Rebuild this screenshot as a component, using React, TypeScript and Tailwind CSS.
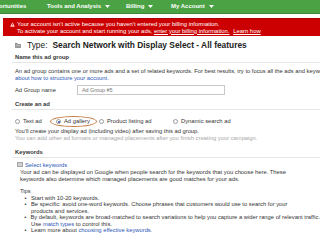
import React from 'react';

const Caret = () => (
  <svg width="5" height="3" viewBox="0 0 5 3" className="ml-[4px] inline-block">
    <path d="M0 0h5L2.5 3z" fill="#fff" />
  </svg>
);

const Radio = ({ checked = false }: { checked?: boolean }) => (
  <span className="inline-flex items-center justify-center w-[5px] h-[5px] rounded-full border border-[#9a9a9a] bg-white mr-[3px]">
    {checked && <span className="w-[2px] h-[2px] rounded-full bg-[#2b4fa8]" />}
  </span>
);

const SectionTitle = ({ children }: { children: React.ReactNode }) => (
  <div className="ml-[12px] pl-[3px] border-b border-[#e6e6e6] font-bold text-[5.8px] leading-[7px] text-[#333] pb-[1px]">
    {children}
  </div>
);

const Bullet = ({ children }: { children: React.ReactNode }) => (
  <li className="flex">
    <span className="w-[11px] text-center">•</span>
    <span>{children}</span>
  </li>
);

export default function App() {
  return (
    <div className="w-[320px] h-[240px] overflow-hidden bg-white font-['Liberation_Sans',Arial,sans-serif] text-[#333]">
      {/* top nav */}
      <div className="h-[14px] bg-[#4aa245] border-b border-[#3a8a38] flex items-center text-white font-bold text-[6px] whitespace-nowrap">
        <span className="w-[48px] -ml-[1px]">ortunities</span>
        <span className="w-[79px] flex items-center">Tools and Analysis<Caret /></span>
        <span className="w-[45px] flex items-center">Billing<Caret /></span>
        <span className="flex items-center">My Account<Caret /></span>
      </div>

      {/* alert */}
      <div className="mt-[4px] ml-[3px] bg-[#cc0000] border-t border-[#a80000] h-[18px] pt-[2px] pl-[7px] text-white text-[5.9px] leading-[6.7px] whitespace-nowrap">
        <div className="flex items-center">
          <svg width="5" height="5" viewBox="0 0 10 10" className="mr-[2px]">
            <path d="M5 0.5L9.7 9.5H0.3z" fill="#ffd5d5" />
            <path d="M4.4 3.5h1.2v3H4.4zM4.4 7.3h1.2v1.2H4.4z" fill="#cc0000" />
          </svg>
          <span>Your account isn't active because you haven't entered your billing information.</span>
        </div>
        <div className="pl-[7px]">
          To activate your account and start running your ads, <span className="underline">enter your billing information.</span>{' '}
          <span className="underline ml-[2px]">Learn how</span>
        </div>
      </div>

      {/* title */}
      <div className="mt-[4px] ml-[15px] flex items-center h-[10px] whitespace-nowrap text-[8.4px] text-[#222]">
        <svg width="6" height="5" viewBox="0 0 6 5" className="mr-[6px]">
          <rect x="0" y="0" width="2.5" height="1.2" fill="#8a8a8a" />
          <rect x="0" y="1" width="6" height="4" fill="#9a9a9a" />
          <rect x="1" y="2" width="4" height="0.6" fill="#d0d0d0" />
        </svg>
        <span className="mr-[5px]">Type:</span>
        <span className="font-bold">Search Network with Display Select - All features</span>
      </div>

      <div className="mt-[4px]">
        <SectionTitle>Name this ad group</SectionTitle>
        <div className="mt-[5px] pl-[15px] text-[5.8px] leading-[6.5px] whitespace-nowrap">
          <div>An ad group contains one or more ads and a set of related keywords. For best results, try to focus all the ads and keywords</div>
          <div className="text-[#2a55b5]">about how to structure your account.</div>
        </div>
        <div className="mt-[4px] pl-[15px] flex items-center text-[5.8px]">
          <span className="w-[62px]">Ad Group name</span>
          <div className="w-[148px] h-[10px] border border-[#c8c8c8] flex items-center pl-[4px] text-[#777] text-[5.4px]">
            Ad Group #5
          </div>
        </div>
      </div>

      <div className="mt-[6px]">
        <SectionTitle>Create an ad</SectionTitle>
        <div className="relative mt-[8px] pl-[15px] flex items-center h-[7px] text-[5.8px] whitespace-nowrap">
          <span className="flex items-center w-[41px]"><Radio />Text ad</span>
          <span className="flex items-center w-[43px]"><Radio checked />Ad gallery</span>
          <span className="flex items-center w-[74px]"><Radio />Product listing ad</span>
          <span className="flex items-center"><Radio />Dynamic search ad</span>
          <span className="absolute left-[50px] -top-[2px] w-[47px] h-[11px] rounded-[50%] border-[1.2px] border-[#c47a40]" />
        </div>
        <div className="mt-[3px] pl-[15px] text-[5.8px] leading-[6.7px] whitespace-nowrap">
          <div>You'll create your display ad (including video) after saving this ad group.</div>
          <div className="text-[#a8a8a8]">You can add other ad formats or managed placements after you finish creating your campaign.</div>
        </div>
      </div>

      <div className="mt-[8px]">
        <SectionTitle>Keywords</SectionTitle>
        <div className="mt-[3px] pl-[17px] flex items-center h-[7px] text-[5.8px]">
          <svg width="6" height="5" viewBox="0 0 6 5" className="mr-[2px]">
            <rect x="0" y="0" width="6" height="5" fill="#a5a5a5" />
            <rect x="1" y="1" width="4" height="0.6" fill="#eee" />
            <rect x="1" y="2.2" width="4" height="0.6" fill="#eee" />
            <rect x="1" y="3.4" width="4" height="0.6" fill="#eee" />
          </svg>
          <span className="text-[#2a55b5]">Select keywords</span>
        </div>
        <div className="mt-[1px] pl-[20px] text-[5.8px] leading-[6.5px] whitespace-nowrap">
          <div>Your ad can be displayed on Google when people search for the keywords that you choose here. These</div>
          <div>keywords also determine which managed placements are good matches for your ads.</div>
          <div className="mt-[6px]">Tips</div>
          <ul className="leading-[6.4px]">
            <Bullet>Start with 10-20 keywords.</Bullet>
            <Bullet>Be specific: avoid one-word keywords. Choose phrases that customers would use to search for your</Bullet>
            <li className="pl-[11px]">products and services.</li>
            <Bullet>By default, keywords are broad-matched to search variations to help you capture a wider range of relevant traffic.</Bullet>
            <li className="pl-[11px]">Use <span className="text-[#2a55b5]">match types</span> to control this.</li>
            <Bullet>Learn more about <span className="text-[#2a55b5]">choosing effective keywords.</span></Bullet>
          </ul>
        </div>
      </div>
    </div>
  );
}
